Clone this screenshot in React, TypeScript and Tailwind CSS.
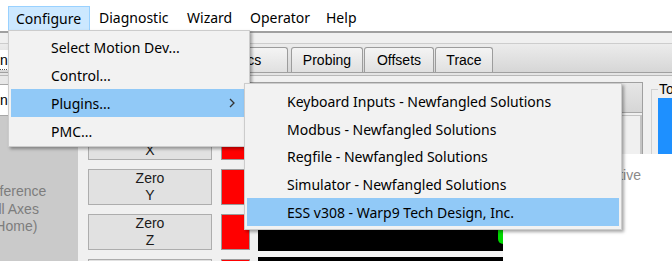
import React from 'react';

const menuBar = [
  { label: 'Configure', w: 'w-[82px] mr-[2px]', active: true },
  { label: 'Diagnostic', w: 'w-[88px]' },
  { label: 'Wizard', w: 'w-[63px]' },
  { label: 'Operator', w: 'w-[76px]' },
  { label: 'Help', w: 'w-[45px]' },
];

const configureItems = ['Select Motion Dev...', 'Control...', 'Plugins...', 'PMC...'];

const pluginItems = [
  'Keyboard Inputs - Newfangled Solutions',
  'Modbus - Newfangled Solutions',
  'Regfile - Newfangled Solutions',
  'Simulator - Newfangled Solutions',
  'ESS v308 - Warp9 Tech Design, Inc.',
];

function ZeroButton({ axis }: { axis: string }) {
  return (
    <div className="flex h-[36px] shrink-0 flex-col items-center justify-center border border-[#adadad] bg-[#e1e1e1] text-[14px] leading-[17px] text-[#1a1a1a]">
      <span>Zero</span>
      <span>{axis}</span>
    </div>
  );
}

function Tab({ label, w }: { label: string; w: string }) {
  return (
    <div
      className={`${w} flex h-[25px] shrink-0 items-center justify-center rounded-t-[3px] border border-b-0 border-[#9c9c9c] bg-gradient-to-b from-[#f4f4f4] to-[#e0e0e0] text-[14px] text-black`}
    >
      {label}
    </div>
  );
}

export default function App() {
  return (
    <div className="relative h-[262px] w-[672px] overflow-hidden bg-white font-['Liberation_Sans',Arial,sans-serif]">
      {/* menu bar */}
      <div className="flex h-[31px] items-start bg-white pl-[8px] pt-[6px] font-['Noto_Sans',sans-serif] text-[14px] text-black">
        {menuBar.map((m) => (
          <div
            key={m.label}
            className={`${m.w} h-[25px] pl-[7px] leading-[24px] ${
              m.active ? 'border border-b-0 border-[#99d1ff] bg-[#cce8ff] pl-[6px]' : ''
            }`}
          >
            {m.label}
          </div>
        ))}
      </div>
      <div className="h-[2px] bg-[#a0a0a0]" />
      <div className="h-[10px] bg-[#f0f0f0]" />

      {/* tab strip */}
      <div className="flex h-[30px] items-end border-t border-b border-t-[#cdcdcd] border-b-[#a0a0a0] bg-gradient-to-b from-[#ececec] to-[#d6d6d6]">
        <div className="mb-[2px] flex h-[20px] w-[9px] shrink-0 items-center overflow-hidden border-b border-dotted border-[#555] bg-white text-[14px] leading-none">
          n
        </div>
        <div className="w-[153px] shrink-0" />
        <Tab label="Diagnostics" w="w-[126px]" />
        <div className="w-[3px] shrink-0" />
        <Tab label="Probing" w="w-[72px]" />
        <div className="w-[1px] shrink-0" />
        <Tab label="Offsets" w="w-[70px]" />
        <div className="w-[1px] shrink-0" />
        <Tab label="Trace" w="w-[58px]" />
      </div>
      <div className="h-[3px] border-b border-[#b8b8b8] bg-[#e4e4e4]" />

      {/* content */}
      <div className="flex h-[185px] overflow-hidden bg-[#f0f0f0]">
        {/* left column */}
        <div className="flex w-[78px] shrink-0 flex-col">
          <div className="h-[9px] shrink-0 border-b border-[#a8a8a8] bg-[#e8e8e8]" />
          <div className="flex h-[30px] shrink-0 items-center overflow-hidden bg-white text-[14px]">n</div>
          <div className="h-[1px] shrink-0 bg-[#a8a8a8]" />
          <div className="flex flex-1 overflow-hidden bg-[#cacaca] pt-[67px]">
            <div className="-ml-[26px] w-[80px] shrink-0 text-center text-[14px] leading-[17.5px] text-[#7d7d7d]">
              <div>Reference</div>
              <div>All Axes</div>
              <div>(Home)</div>
            </div>
          </div>
        </div>
        <div className="w-[10px] shrink-0" />

        {/* zero buttons */}
        <div className="flex w-[124px] shrink-0 flex-col gap-[9px] pt-[3px]">
          <ZeroButton axis="A" />
          <ZeroButton axis="X" />
          <ZeroButton axis="Y" />
          <ZeroButton axis="Z" />
          <ZeroButton axis="B" />
        </div>
        <div className="w-[9px] shrink-0" />

        {/* red leds */}
        <div className="flex w-[29px] shrink-0 flex-col gap-[9px] pt-[3px]">
          {[0, 1, 2, 3, 4].map((i) => (
            <div key={i} className="h-[36px] shrink-0 border border-[#9a9a9a] bg-[#ff0000]" />
          ))}
        </div>

        {/* right section */}
        <div className="flex flex-1 flex-col">
          <div className="flex h-[78px] shrink-0">
            <div className="mt-[6px] flex flex-1 flex-col border-t border-r border-[#a0a0a0] bg-[#f0f0f0]">
              <div className="h-[30px] border-b border-[#a8a8a8] bg-gradient-to-b from-[#e6e6e6] to-[#d6d6d6]" />
              <div className="mt-[2px] flex-1 border-t border-r-2 border-[#c4c4c4] bg-[#f0f0f0]" />
            </div>
            <div className="w-[29px] pl-[8px] pt-[13px]">
              <div className="relative h-full border-t border-l border-[#d0d0d0] pl-[6px] pt-[8px]">
                <span className="absolute -top-[10px] left-[6px] bg-[#f0f0f0] px-[1px] text-[14px] leading-[18px] text-black">
                  To
                </span>
                <div className="h-full bg-[#1e90ff]" />
              </div>
            </div>
          </div>
          <div className="flex flex-1 bg-white">
            <div className="w-[8px] shrink-0 bg-[#f0f0f0]" />
            <div className="flex w-[245px] shrink-0 flex-col bg-[#f4f4f4] pt-[15px]">
              <div className="h-[36px] shrink-0 bg-black" />
              <div className="relative mt-[9px] h-[37px] shrink-0 bg-black">
                <div className="absolute right-0 top-[15px] h-[15px] w-[5px] rounded-bl-full bg-[#00d800]" />
              </div>
              <div className="mt-[6px] h-[20px] shrink-0 bg-black" />
            </div>
            <div className="flex flex-1 justify-end pr-[31px] pt-[11px] text-[14px] text-[#8a8a8a]">Inactive</div>
          </div>
        </div>
      </div>

      {/* Configure dropdown */}
      <div className="absolute left-[8px] top-[30px] w-[242px] border border-[#cccccc] bg-[#f2f2f2] pb-[1px] pt-[2px] font-['Noto_Sans',sans-serif] text-[14px] text-black shadow-[2px_2px_3px_rgba(0,0,0,0.35)]">
        {configureItems.map((label) => (
          <div
            key={label}
            className={`mx-[2px] flex h-[28px] items-center justify-between pl-[40px] pr-[12px] ${
              label === 'Plugins...' ? 'bg-[#91c9f7]' : ''
            }`}
          >
            <span>{label}</span>
            {label === 'Plugins...' && (
              <svg width="6" height="10" viewBox="0 0 6 10">
                <polyline points="1,1 5,5 1,9" fill="none" stroke="#333" strokeWidth="1.3" />
              </svg>
            )}
          </div>
        ))}
      </div>

      {/* Plugins submenu */}
      <div className="absolute left-[244px] top-[83px] w-[378px] border border-[#cccccc] bg-[#f2f2f2] pb-[3px] pt-[4px] font-['Noto_Sans',sans-serif] text-[14px] text-black shadow-[2px_2px_3px_rgba(0,0,0,0.35)]">
        {pluginItems.map((label, i) => (
          <div
            key={label}
            className={`mx-[2px] flex h-[27.6px] items-center pl-[40px] ${
              i === pluginItems.length - 1 ? 'bg-[#91c9f7]' : ''
            }`}
          >
            {label}
          </div>
        ))}
      </div>
    </div>
  );
}
